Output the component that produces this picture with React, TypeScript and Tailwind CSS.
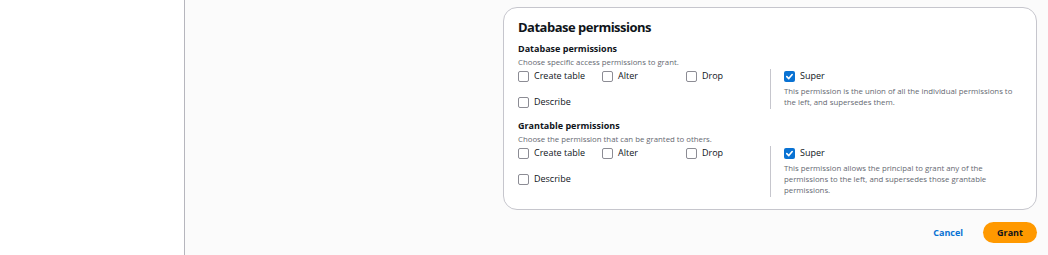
import React from 'react';

const font = { fontFamily: '"Open Sans", "Noto Sans", sans-serif' };

const Box = ({ checked }: { checked?: boolean }) =>
  checked ? (
    <span className="flex h-[11px] w-[11px] shrink-0 items-center justify-center rounded-[2px] bg-[#0972d3]">
      <svg width="9" height="9" viewBox="0 0 10 10" fill="none">
        <path d="M2 5.2 L4.2 7.3 L8 2.8" stroke="#fff" strokeWidth="1.8" strokeLinecap="round" strokeLinejoin="round" />
      </svg>
    </span>
  ) : (
    <span className="h-[11px] w-[11px] shrink-0 rounded-[2px] border border-[#8c8c94] bg-white" />
  );

const Check = ({ label, checked }: { label: string; checked?: boolean }) => (
  <label className="flex h-[14px] items-center gap-[5px] text-[9px] leading-[14px] text-[#0f141a]">
    <Box checked={checked} />
    <span>{label}</span>
  </label>
);

interface SectionProps {
  title: string;
  hint: string;
  superText: string;
}

const Section = ({ title, hint, superText }: SectionProps) => (
  <div>
    <div className="text-[9px] font-bold leading-[12px] text-[#0f141a]">{title}</div>
    <div className="mt-[1px] text-[7.8px] leading-[12px] text-[#656871]">{hint}</div>
    <div className="mt-[1px] flex">
      <div className="grid w-[252px] grid-cols-3 content-start gap-y-[12px]">
        <Check label="Create table" />
        <Check label="Alter" />
        <Check label="Drop" />
        <Check label="Describe" />
      </div>
      <div className="flex-1 border-l border-[#c6c6cd] pb-[1px] pl-[13px]">
        <Check label="Super" checked />
        <p className="mt-[3px] max-w-[236px] text-[7.8px] leading-[11px] text-[#656871]">{superText}</p>
      </div>
    </div>
  </div>
);

export default function App() {
  return (
    <div className="flex h-[255px] w-[1048px] overflow-hidden" style={font}>
      <aside className="w-[185px] shrink-0 border-r border-[#b6b6bd] bg-white" />
      <main className="flex flex-1 flex-col items-end bg-[#fbfbfb] pr-[11px] pt-[7px]">
        <section className="h-[203px] w-[534px] rounded-[14px] border border-[#c6c6cd] bg-white px-[14px] pt-[11px]">
          <h2 className="text-[13px] font-bold leading-[16px] tracking-[-0.5px] text-[#0f141a]">Database permissions</h2>
          <div className="mt-[8px]">
            <Section
              title="Database permissions"
              hint="Choose specific access permissions to grant."
              superText="This permission is the union of all the individual permissions to the left, and supersedes them."
            />
          </div>
          <div className="mt-[11px]">
            <Section
              title="Grantable permissions"
              hint="Choose the permission that can be granted to others."
              superText="This permission allows the principal to grant any of the permissions to the left, and supersedes those grantable permissions."
            />
          </div>
        </section>
        <div className="mt-[12px] flex items-center gap-[20px]">
          <button className="text-[9px] font-bold text-[#0972d3]">Cancel</button>
          <button className="h-[21px] w-[54px] rounded-full bg-[#ff9900] text-[9px] font-bold text-[#0f141a]">Grant</button>
        </div>
      </main>
    </div>
  );
}
